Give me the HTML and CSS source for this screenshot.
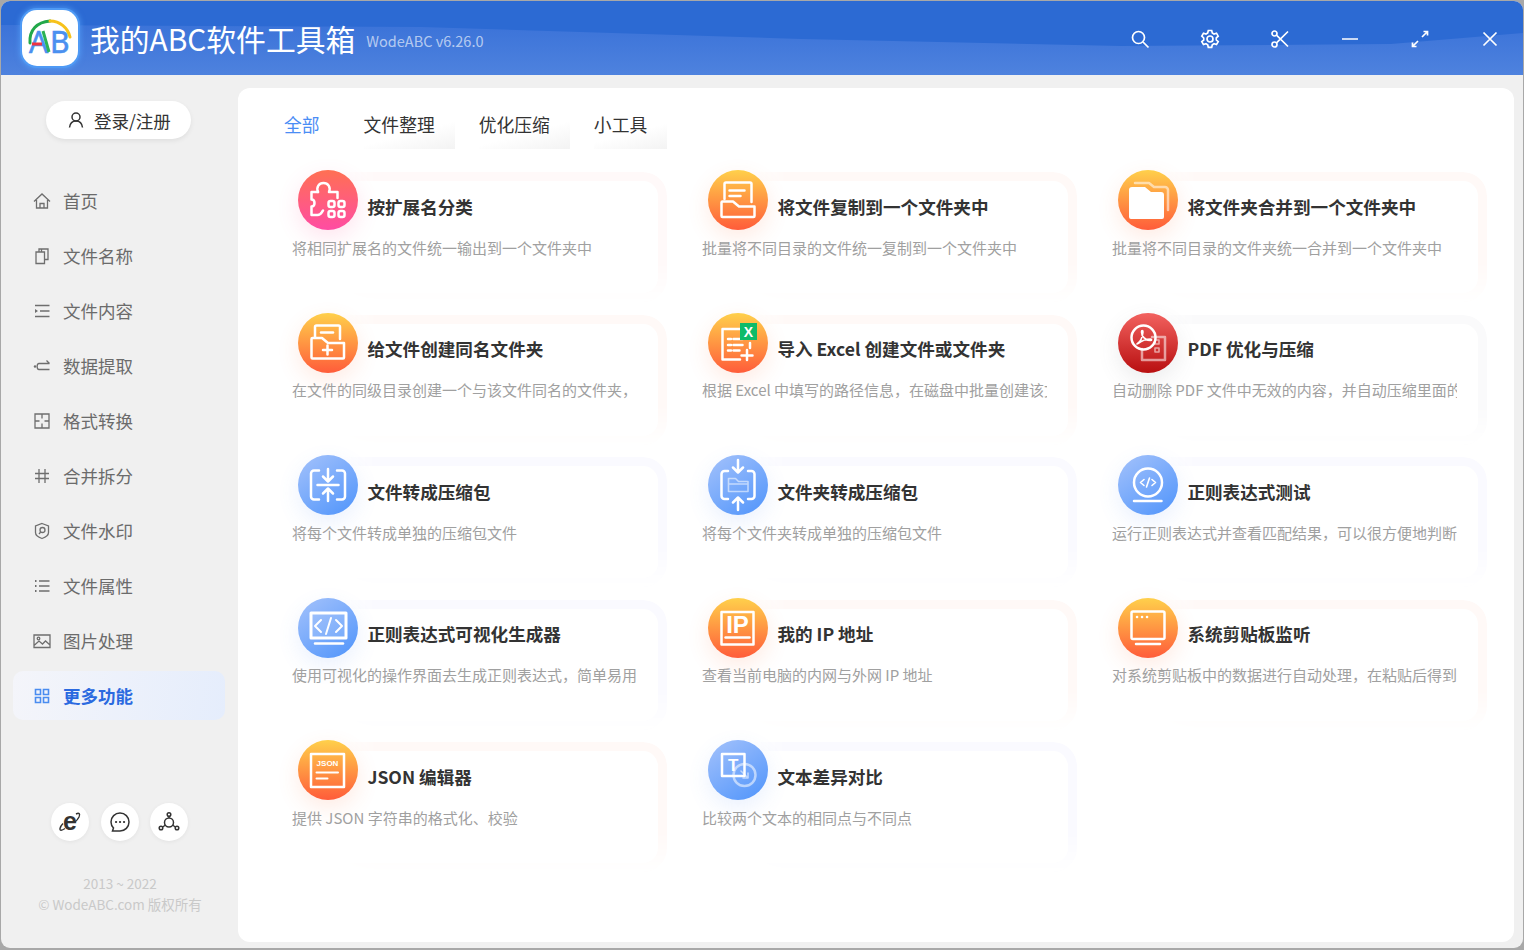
FILE: index.html
```html
<!DOCTYPE html>
<html lang="zh-CN">
<head>
<meta charset="utf-8">
<title>我的ABC软件工具箱</title>
<link rel="stylesheet" href="styles.css">
</head>
<body>
<div class="window">
  <header class="titlebar">
    <div class="logo">
      <svg viewBox="0 0 52 52" width="52" height="52">
        <path class="arc-g" d="M6 31C5 18 13 10 26 9"/>
        <path class="arc-y" d="M26 9c10 0 18 7 20 16"/>
        <text class="logo-a" x="5" y="41">A</text>
        <text class="logo-b" x="26" y="41">B</text>
        <path class="logo-red" d="M8 32h10"/>
        <path class="logo-green" d="M19 19l6 21"/>
      </svg>
    </div>
    <h1 class="app-name">我的ABC软件工具箱</h1>
    <span class="version">WodeABC v6.26.0</span>
    <div class="controls">
      <button class="ctl"><svg viewBox="0 0 20 20"><circle cx="8.500" cy="8.500" r="6"/><path d="M13 13l5.500 5.500"/></svg></button>
      <button class="ctl"><svg viewBox="0 0 20 20"><path d="M8.300 1.500h3.400l.6 2.500 1.700 1 2.500-.8 1.700 3-1.900 1.700v2l1.900 1.700-1.700 3-2.500-.8-1.700 1-.6 2.500H8.300l-.6-2.500-1.700-1-2.500.8-1.700-3L3.700 11V9L1.800 7.200l1.700-3 2.500.8 1.700-1z"/><circle cx="10" cy="10" r="3"/></svg></button>
      <button class="ctl"><svg viewBox="0 0 20 20"><circle cx="4.500" cy="4.500" r="2.500"/><circle cx="4.500" cy="15.500" r="2.500"/><path d="M6.500 6.200 18 17.500M6.500 13.800 18 2.500"/></svg></button>
      <button class="ctl"><svg viewBox="0 0 20 20"><path d="M2 10h16"/></svg></button>
      <button class="ctl"><svg viewBox="0 0 20 20"><path d="M12 8l5-5M13.500 2.500h4v4M8 12l-5 5M2.500 13.500v4h4"/></svg></button>
      <button class="ctl"><svg viewBox="0 0 20 20"><path d="M3.500 3.500l13 13M16.500 3.500l-13 13"/></svg></button>
    </div>
  </header>

  <div class="body-row">
    <aside class="sidebar">
      <button class="login">
        <svg viewBox="0 0 18 18" width="18" height="18"><circle cx="9" cy="6" r="4"/><path d="M2.500 16.500c.5-4 3-6.500 6.500-6.500s6 2.500 6.500 6.500"/></svg>
        <span>登录/注册</span>
      </button>
      <nav class="nav">
        <a class="nav-item"><svg viewBox="0 0 18 18"><path d="M1 9.500 9 2l8 7.500M3.500 8v8h11V8M7 16v-4.500h4V16"/></svg>首页</a>
        <a class="nav-item"><svg viewBox="0 0 18 18"><path d="M3 5h8.500v11.500H3zM6 5V2h9v10.500h-3.500M8.500 2v3"/></svg>文件名称</a>
        <a class="nav-item"><svg viewBox="0 0 18 18"><path d="M2 3.500h14.500M7 9h9.500M2 14.500h14.500"/><path class="solid" d="M2 7l3 2-3 2z"/></svg>文件内容</a>
        <a class="nav-item"><svg viewBox="0 0 18 18"><path d="M6 6.500h10.500M13.500 3.500l3 3M6 12.500h10.500M6 6.500c-2.500 0-2.500 6 0 6"/><circle class="solid" cx="2" cy="9.500" r="1.200"/></svg>数据提取</a>
        <a class="nav-item"><svg viewBox="0 0 18 18"><path d="M2 2h14v14H2zM9 2v4.500M9 11.500V16M2 9h4.500M11.500 9H16"/></svg>格式转换</a>
        <a class="nav-item"><svg viewBox="0 0 18 18"><path d="M6 2v14M12 2v14M2 6.500h14M2 11.500h14"/></svg>合并拆分</a>
        <a class="nav-item"><svg viewBox="0 0 18 18"><path d="M9 1.500l6.500 2.500v6.500c0 2.700-3 4.800-6.500 6-3.500-1.200-6.500-3.300-6.500-6V4z"/><circle cx="9.500" cy="8" r="2.500"/><path d="M7.700 10l-1.700 2"/></svg>文件水印</a>
        <a class="nav-item"><svg viewBox="0 0 18 18"><path d="M6 4h10.500M6 9h10.500M6 14h10.500"/><path class="dash" d="M2 4h1.500M2 9h1.500M2 14h1.500"/></svg>文件属性</a>
        <a class="nav-item"><svg viewBox="0 0 18 18"><path d="M1 3h16v12.500H1zM1 13.500l5-4.500 3.500 3 3-3 4.500 4"/><circle cx="5.500" cy="6.500" r="1.300"/></svg>图片处理</a>
        <a class="nav-item active"><svg viewBox="0 0 18 18"><path d="M2.500 2.500h5v5h-5zM10.500 2.500h5v5h-5zM2.500 10.500h5v5h-5zM10.500 10.500h5v5h-5z"/></svg>更多功能</a>
      </nav>
      <div class="social">
        <span class="round"><svg viewBox="0 0 24 24" width="24" height="24"><text class="ie" x="12" y="20">e</text><path class="ie-ring" d="M18 4c3-1.500 4.500-.5 3 3-1 2-2.500 4-4.500 5.500M7 18.500c-3 2-5.500 2.500-5 0 .3-1.500 1.500-3.500 3-5"/></svg></span>
        <span class="round"><svg viewBox="0 0 22 22" width="22" height="22"><path class="chat" d="M11 2c5 0 9 4 9 9s-4 9-9 9H3.500l1-3C3 15.500 2 13.500 2 11c0-5 4-9 9-9z"/><path class="chat-dots" d="M7 11h.1M11 11h.1M15 11h.1"/></svg></span>
        <span class="round"><svg viewBox="0 0 22 22" width="22" height="22"><circle class="chat" cx="11" cy="11.500" r="4.500"/><circle class="chat" cx="11" cy="3.500" r="1.800"/><circle class="chat" cx="3" cy="17" r="1.800"/><circle class="chat" cx="19" cy="17" r="1.800"/><path class="chat" d="M11 5.300V7M4.600 16l3-2M17.400 16l-3-2"/></svg></span>
      </div>
      <p class="copyright">2013 ~ 2022<br>© WodeABC.com 版权所有</p>
    </aside>

    <main class="content">
      <div class="tabs">
        <a class="tab current">全部</a>
        <a class="tab">文件整理</a>
        <a class="tab">优化压缩</a>
        <a class="tab">小工具</a>
      </div>
      <section class="grid">
        <article class="card pink">
          <div class="head"><span class="badge g-pink"><svg viewBox="0 0 60 60"><path d="M20 22h-6.500v7.500c4 0 4 7 0 7V45h6c3.500 0 4-2.500 5.500-4.500"/><path d="M20 22c-2-5 1-9 5.500-9s7.500 4 5.500 9h8.500v6"/><rect x="30.500" y="31" width="6" height="6" rx="2"/><rect x="40.500" y="31" width="6" height="6" rx="2"/><rect x="30.500" y="41" width="6" height="6" rx="2"/><rect x="40.500" y="41" width="6" height="6" rx="2"/></svg></span><h3>按扩展名分类</h3></div>
          <p>将相同扩展名的文件统一输出到一个文件夹中</p>
        </article>
        <article class="card orange">
          <div class="head"><span class="badge g-orange"><svg viewBox="0 0 60 60"><path d="M16.500 29V14a1.500 1.500 0 0 1 1.500-1.500h24a1.500 1.500 0 0 1 1.500 1.500v18"/><path d="M21.500 20.500h15M21.500 26h11"/><path d="M13.500 46V32.500a1 1 0 0 1 1-1H25l6 5h15.500V46a1 1 0 0 1-1 1h-31a1 1 0 0 1-1-1z"/></svg></span><h3>将文件复制到一个文件夹中</h3></div>
          <p>批量将不同目录的文件统一复制到一个文件夹中</p>
        </article>
        <article class="card orange">
          <div class="head"><span class="badge g-orange"><svg viewBox="0 0 60 60"><path class="soft" d="M17 13h14l5 4h11a3 3 0 0 1 3 3v20"/><path class="fill" d="M11 20a3 3 0 0 1 3-3h13l6 5h10a3 3 0 0 1 3 3v22a2 2 0 0 1-2 2H13a2 2 0 0 1-2-2z"/></svg></span><h3>将文件夹合并到一个文件夹中</h3></div>
          <p>批量将不同目录的文件夹统一合并到一个文件夹中</p>
        </article>

        <article class="card orange">
          <div class="head"><span class="badge g-orange"><svg viewBox="0 0 60 60"><path d="M17 24V14a1.500 1.500 0 0 1 1.500-1.500h22A1.500 1.500 0 0 1 42 14v12"/><path d="M23 19.500h12"/><path d="M13.500 44.500V26a1 1 0 0 1 1-1H24l6 5h16v14.500a1 1 0 0 1-1 1H14.500a1 1 0 0 1-1-1z"/><path d="M25 37h9M29.500 32.500v9"/></svg></span><h3>给文件创建同名文件夹</h3></div>
          <p>在文件的同级目录创建一个与该文件同名的文件夹，</p>
        </article>
        <article class="card orange">
          <div class="head"><span class="badge g-orange"><svg viewBox="0 0 60 60"><path d="M32 16H14.500v30.500H32"/><path d="M20 26h3M25.500 26h9M20 32h3M25.500 32h9M20 37.500h3M25.500 37.500h6"/><path d="M42 30v5M39 37v10M33.500 42.500h11"/><rect class="xl" x="32" y="10" width="17" height="17"/><text class="xl-t" x="40.500" y="24">X</text></svg></span><h3>导入 Excel 创建文件或文件夹</h3></div>
          <p>根据 Excel 中填写的路径信息，在磁盘中批量创建该文件或文件夹</p>
        </article>
        <article class="card grey">
          <div class="head"><span class="badge g-red"><svg viewBox="0 0 60 60"><path class="soft" d="M34 24h13v23H24V36"/><rect class="soft thin" x="37" y="27" width="4" height="4"/><rect class="soft thin" x="37" y="35" width="4" height="4"/><circle cx="25.500" cy="24.500" r="12"/><path class="thin" d="M19 31c3-2 5.500-6.500 6-12 0-2-1.500-2-1.500 0 0 4.500 4 8.500 9 8.500 1.500 0 1.500-1.500 0-1.500-4 0-9 2-12.500 4.500"/></svg></span><h3>PDF 优化与压缩</h3></div>
          <p>自动删除 PDF 文件中无效的内容，并自动压缩里面的图片</p>
        </article>

        <article class="card blue">
          <div class="head"><span class="badge g-blue"><svg viewBox="0 0 60 60"><path d="M21 15.500h-5a3 3 0 0 0-3 3v23a3 3 0 0 0 3 3h5M39 15.500h5a3 3 0 0 1 3 3v23a3 3 0 0 1-3 3h-5"/><path d="M19.500 30h21M30 14v12M25 21.500l5 5 5-5M30 46V34M25 38.500l5-5 5 5"/></svg></span><h3>文件转成压缩包</h3></div>
          <p>将每个文件转成单独的压缩包文件</p>
        </article>
        <article class="card blue">
          <div class="head"><span class="badge g-blue"><svg viewBox="0 0 60 60"><path d="M20 16h-3.500a3 3 0 0 0-3 3v22a3 3 0 0 0 3 3H20M40 16h3.500a3 3 0 0 1 3 3v22a3 3 0 0 1-3 3H40"/><path d="M30 5v12M25 12.500l5 5 5-5M30 55V43M25 47.500l5-5 5 5"/><path class="soft thin" d="M20.500 36.500V23.500h7l3 3h9.500v10zM20.500 29h19.500"/></svg></span><h3>文件夹转成压缩包</h3></div>
          <p>将每个文件夹转成单独的压缩包文件</p>
        </article>
        <article class="card blue">
          <div class="head"><span class="badge g-blue"><svg viewBox="0 0 60 60"><circle cx="30" cy="27.500" r="14"/><path class="thin" d="M22.500 27.500l3.500-3M22.500 27.500l3.500 3M37.500 27.500l-3.500-3M37.500 27.500l-3.500 3M31.500 23l-3 9"/><path d="M16 46h27.500"/></svg></span><h3>正则表达式测试</h3></div>
          <p>运行正则表达式并查看匹配结果，可以很方便地判断正则</p>
        </article>

        <article class="card blue">
          <div class="head"><span class="badge g-blue"><svg viewBox="0 0 60 60"><path class="tint" d="M13 15h35v25H13z"/><path d="M17 45.500h28"/><path class="mid" d="M23 22l-6 6 6 6M38 22l6 6-6 6M33 20l-5 16"/></svg></span><h3>正则表达式可视化生成器</h3></div>
          <p>使用可视化的操作界面去生成正则表达式，简单易用</p>
        </article>
        <article class="card orange">
          <div class="head"><span class="badge g-orange"><svg viewBox="0 0 60 60"><path d="M13.500 14h32v32.500h-32z"/><path d="M17.500 39.500h24"/><text class="ip" x="29.500" y="35">IP</text></svg></span><h3>我的 IP 地址</h3></div>
          <p>查看当前电脑的内网与外网 IP 地址</p>
        </article>
        <article class="card orange">
          <div class="head"><span class="badge g-orange"><svg viewBox="0 0 60 60"><rect x="13.500" y="13.500" width="33" height="27.500" rx="1.500"/><path d="M18 46h24"/><path class="dots" d="M19 19h.1M24 19h.1M29 19h.1"/></svg></span><h3>系统剪贴板监听</h3></div>
          <p>对系统剪贴板中的数据进行自动处理，在粘贴后得到结果</p>
        </article>

        <article class="card orange">
          <div class="head"><span class="badge g-orange"><svg viewBox="0 0 60 60"><path d="M13 14h33v33H13z"/><path class="mid" d="M18.500 32.500h21.500M18.500 38.500h11"/><text class="json" x="29.500" y="26">JSON</text></svg></span><h3>JSON 编辑器</h3></div>
          <p>提供 JSON 字符串的格式化、校验</p>
        </article>
        <article class="card blue">
          <div class="head"><span class="badge g-blue"><svg viewBox="0 0 60 60"><circle class="soft" cx="36.500" cy="35" r="11"/><path class="soft thin" d="M33 31l7 7M40 33v5h-5"/><path class="tint2" d="M14 14h22.500v22H14z"/><text class="t" x="25.200" y="31">T</text></svg></span><h3>文本差异对比</h3></div>
          <p>比较两个文本的相同点与不同点</p>
        </article>
      </section>
    </main>
  </div>
</div>
</body>
</html>
```
FILE: styles.css
```css
*, *::before { box-sizing: border-box; }
html, body { margin: 0; height: 100%; }
body {
  background: #a8a8a8;
  overflow: hidden;
  font-family: "Noto Sans CJK SC", "Noto Sans", sans-serif;
  padding: 1px;
}
.window {
  width: 1522px;
  height: 947px;
  background: #f0f0f0;
  border-radius: 9px;
  overflow: hidden;
  display: flex;
  flex-direction: column;
}

/* title bar */
.titlebar {
  position: relative;
  height: 74px;
  flex: none;
  background: #2c6ad3;
  display: flex;
  align-items: center;
  padding-left: 21px;
  color: #fff;
}
.titlebar::before {
  content: "";
  position: absolute;
  inset: 0;
  background: linear-gradient(180deg, #3a72d8 20px, #4e82de 74px);
  clip-path: polygon(0 24px, 420px 26px, 800px 38px, 1120px 45px, 1390px 43px, 1522px 32px, 1522px 74px, 0 74px);
}
.titlebar > * { position: relative; }
.logo {
  width: 56px;
  height: 56px;
  border-radius: 15px;
  background: #fff;
  box-shadow: 0 0 0 2px #4f9af5, 0 0 5px 3px rgba(90, 170, 255, .55);
  display: flex;
  align-items: center;
  justify-content: center;
  flex: none;
}
.logo svg { fill: none; }
.arc-g { stroke: #22a84a; stroke-width: 3; stroke-linecap: round; }
.arc-y { stroke: #f7c21b; stroke-width: 3; stroke-linecap: round; }
.logo-a, .logo-b {
  font-family: "Noto Sans", sans-serif;
  font-size: 30px;
  fill: #4a90f0;
  stroke: #4a90f0;
  stroke-width: .6;
}
.logo-red { stroke: #ee3340; stroke-width: 3; }
.logo-green { stroke: #2bb255; stroke-width: 3; }
.app-name {
  margin: 0 0 0 12px;
  font-size: 29.800px;
  font-weight: 400;
  line-height: 44px;
  white-space: nowrap;
  color: #fff;
}
.version {
  margin: 5px 0 0 11px;
  font-size: 14.500px;
  color: rgba(255, 255, 255, .62);
  white-space: nowrap;
}
.controls {
  margin-left: auto;
  margin-right: -2px;
  margin-top: 1px;
  display: flex;
  flex: none;
}
.ctl {
  width: 70px;
  height: 40px;
  padding: 0;
  border: 0;
  background: none;
  display: flex;
  align-items: center;
  justify-content: center;
}
.ctl svg {
  width: 20px;
  height: 20px;
  fill: none;
  stroke: #fff;
  stroke-width: 1.700;
}

/* layout */
.body-row {
  flex: 1;
  display: flex;
  min-height: 0;
}

/* sidebar */
.sidebar {
  width: 237px;
  flex: none;
  display: flex;
  flex-direction: column;
  padding: 26px 0 0 12px;
}
.login {
  width: 145px;
  height: 38px;
  margin-left: 33px;
  padding: 0 0 0 21px;
  border: 0;
  border-radius: 19px;
  background: #fff;
  box-shadow: 0 2px 5px rgba(0, 0, 0, .07);
  display: flex;
  align-items: center;
  gap: 9px;
  font: inherit;
  font-size: 17.500px;
  color: #333;
}
.login svg {
  fill: none;
  stroke: #333;
  stroke-width: 1.500;
  flex: none;
}
.nav {
  margin-top: 37px;
  width: 212px;
  display: flex;
  flex-direction: column;
  gap: 6px;
}
.nav-item {
  height: 49px;
  padding-left: 20px;
  display: flex;
  align-items: center;
  gap: 12px;
  font-size: 17.500px;
  color: #6b6b6b;
  border-radius: 10px;
}
.nav-item svg {
  width: 18px;
  height: 18px;
  fill: none;
  stroke: #6e6e6e;
  stroke-width: 1.300;
  flex: none;
}
.nav-item .solid { fill: #6e6e6e; stroke: none; }
.nav-item .dash { stroke-width: 1.800; }
.nav-item.active {
  background: linear-gradient(100deg, #f4f5fa 0%, #e5edfc 100%);
  color: #2b6ae0;
  font-weight: 700;
}
.nav-item.active svg { stroke: #4a8cf0; stroke-width: 1.600; }

.social {
  margin-top: 83px;
  margin-left: 38px;
  display: flex;
  gap: 11.500px;
}
.round {
  width: 38px;
  height: 38px;
  border-radius: 50%;
  background: #fff;
  box-shadow: 0 1px 4px rgba(0, 0, 0, .06);
  display: flex;
  align-items: center;
  justify-content: center;
}
.round svg { fill: none; overflow: visible; }
.ie {
  font-family: "Liberation Sans", sans-serif;
  font-weight: 700;
  font-size: 25px;
  text-anchor: middle;
  fill: #333;
}
.ie-ring { stroke: #333; stroke-width: 1.400; fill: none; }
.chat { stroke: #333; stroke-width: 1.500; fill: none; }
.chat-dots { stroke: #333; stroke-width: 2.200; stroke-linecap: round; }
.copyright {
  margin: 32px 0 0 -12px;
  width: 238px;
  font-size: 13.500px;
  line-height: 21px;
  text-align: center;
  color: #c9c9c9;
}

/* main */
.content {
  width: 1276px;
  margin: 13px 0 6px 0;
  background: #fff;
  border-radius: 12px;
  padding: 23px 0 0 46px;
  overflow: hidden;
}
.tabs {
  display: flex;
  gap: 24px;
}
.tab {
  height: 38px;
  padding-right: 20px;
  font-size: 17.800px;
  line-height: 26px;
  color: #333;
  background: linear-gradient(165deg, #fff 55%, #f3f3f3 100%);
}
.tab.current {
  color: #4a8df5;
  background: none;
}
.grid {
  margin: 21px 0 0 8px;
  display: grid;
  grid-template-columns: repeat(3, 410px);
  grid-auto-rows: 142.500px;
}
.card {
  position: relative;
  width: 345px;
}
.card::before {
  content: "";
  position: absolute;
  left: 20px;
  top: 2px;
  width: 355px;
  height: 130px;
  border: 9px solid #fff9f9;
  border-radius: 24px;
  -webkit-mask-image: linear-gradient(180deg, #000 70%, transparent 100%), linear-gradient(90deg, transparent 8%, #000 18%);
  mask-image: linear-gradient(180deg, #000 70%, transparent 100%), linear-gradient(90deg, transparent 8%, #000 18%);
  -webkit-mask-composite: source-in;
  mask-composite: intersect;
}
.card.blue::before { border-color: #fafaff; }
.card.grey::before { border-color: #fafafb; }
.card.orange::before { border-color: #fff9f7; }
.head {
  position: relative;
  display: flex;
  padding-left: 6px;
  height: 60px;
}
.head h3 {
  margin: 21.800px 0 0 9.400px;
  font-size: 17.600px;
  line-height: 30px;
  font-weight: 700;
  color: #333;
  white-space: nowrap;
}
.card p {
  position: relative;
  margin: 6.800px 0 0;
  font-size: 15px;
  line-height: 22px;
  color: #a0a0a0;
  white-space: nowrap;
  overflow: hidden;
}

/* badges */
.badge {
  width: 60px;
  height: 60px;
  flex: none;
  border-radius: 50%;
}
.g-pink { background: linear-gradient(180deg, #ff7053, #ff4ca3); box-shadow: 0 8px 22px rgba(255, 90, 150, .16); }
.g-orange { background: linear-gradient(180deg, #ffd04b, #ff5c3a); box-shadow: 0 8px 22px rgba(255, 110, 60, .14); }
.g-blue { background: linear-gradient(145deg, #a4c2fb, #4f94fb); box-shadow: 0 8px 22px rgba(80, 140, 250, .12); }
.g-red { background: linear-gradient(180deg, #f2625f, #b80f10); box-shadow: 0 8px 22px rgba(100, 100, 110, .12); }
.badge svg {
  display: block;
  width: 60px;
  height: 60px;
  fill: none;
  stroke: #fff;
  stroke-width: 2.500;
  stroke-linecap: round;
  stroke-linejoin: round;
}
.badge .soft { stroke: rgba(255, 255, 255, .55); }
.badge .thin { stroke-width: 1.600; }
.badge .mid { stroke-width: 2; }
.badge .fill { fill: #fff; stroke: none; }
.badge .tint { fill: rgba(255, 255, 255, .12); stroke-width: 3; }
.badge .tint2 { stroke-width: 2.500; }
.badge .dots { stroke-width: 2.500; }
.badge .xl { fill: #0dbb69; stroke: none; }
.badge text {
  fill: #fff;
  stroke: none;
  text-anchor: middle;
  font-family: "Liberation Sans", sans-serif;
  font-weight: 700;
}
.badge .xl-t { font-size: 14px; }
.badge .ip { font-size: 24px; }
.badge .json { font-size: 8px; }
.badge .t { font-size: 17px; }
```
